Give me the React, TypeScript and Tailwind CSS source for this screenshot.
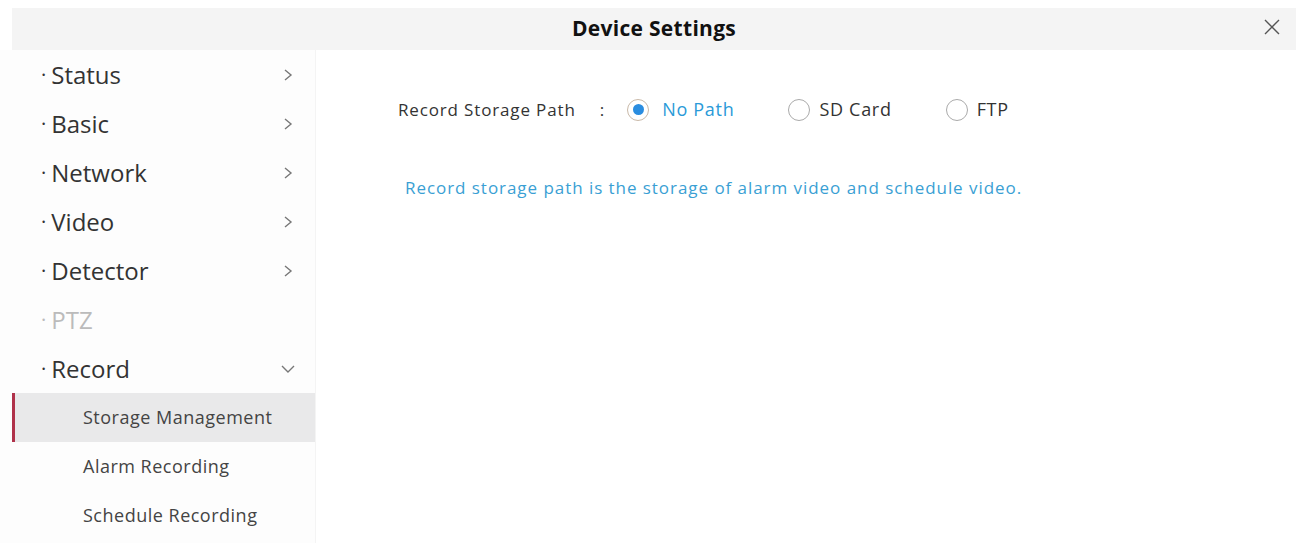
import React from "react";

const font = { fontFamily: '"Open Sans", "Noto Sans", sans-serif' };

const menu = [
  { label: "Status", icon: "right" },
  { label: "Basic", icon: "right" },
  { label: "Network", icon: "right" },
  { label: "Video", icon: "right" },
  { label: "Detector", icon: "right" },
  { label: "PTZ", icon: "none", disabled: true },
  { label: "Record", icon: "down" },
];

const subMenu = [
  { label: "Storage Management", active: true },
  { label: "Alarm Recording" },
  { label: "Schedule Recording" },
];

function Chevron({ dir }: { dir: string }) {
  if (dir === "none") return null;
  return (
    <svg width="14" height="14" viewBox="0 0 14 14" className="text-[#777]">
      {dir === "right" ? (
        <path d="M4 2 L10 7 L4 12" fill="none" stroke="currentColor" strokeWidth="1.4" />
      ) : (
        <path d="M1 4 L7 10 L13 4" fill="none" stroke="currentColor" strokeWidth="1.4" />
      )}
    </svg>
  );
}

function Radio({ label, checked }: { label: string; checked?: boolean }) {
  return (
    <div className={`flex items-center ${checked ? "gap-[13px]" : "gap-[9px]"}`}>
      <span
        className={`w-[22px] h-[22px] rounded-full border flex items-center justify-center ${
          checked ? "border-[#c9b9a8]" : "border-[#aaa]"
        }`}
      >
        {checked && <span className="w-[11px] h-[11px] rounded-full bg-[#2a8de0]" />}
      </span>
      <span className={`text-[18px] tracking-[0.7px] ${checked ? "text-[#2a9ad8]" : "text-[#333]"}`}>
        {label}
      </span>
    </div>
  );
}

export default function App() {
  return (
    <div className="w-[1296px] h-[543px] bg-white overflow-hidden" style={font}>
      {/* Title bar */}
      <div className="mt-[8px] ml-[12px] h-[42px] bg-[#f4f4f4] flex items-center justify-center relative">
        <h1 className="text-[21px] font-bold text-[#111] tracking-[0.3px]">Device Settings</h1>
        <svg
          width="18"
          height="18"
          viewBox="0 0 18 18"
          className="absolute right-[15px] top-[10px] text-[#555]"
        >
          <path d="M2 2 L16 16 M16 2 L2 16" stroke="currentColor" strokeWidth="1.4" />
        </svg>
      </div>

      <div className="flex">
        {/* Sidebar */}
        <nav className="w-[316px] pl-[12px] bg-[#fdfdfd] border-r border-[#f4f4f4] h-[493px]">
          {menu.map((m) => (
            <div key={m.label} className="h-[49px] flex items-center justify-between pl-[29px] pr-[20px]">
              <span className={`text-[24px] ${m.disabled ? "text-[#bbb]" : "text-[#333]"}`}>
                <span className="text-[20px] mr-[5px] relative -top-[2px]">·</span>
                {m.label}
              </span>
              <Chevron dir={m.icon} />
            </div>
          ))}
          {subMenu.map((s) => (
            <div
              key={s.label}
              className={`h-[49px] flex items-center text-[18px] tracking-[0.5px] text-[#444] ${
                s.active ? "bg-[#e9e9ea] border-l-[3px] border-[#b0324a] pl-[68px]" : "pl-[71px]"
              }`}
            >
              {s.label}
            </div>
          ))}
        </nav>

        {/* Content */}
        <main className="flex-1 pl-[82px] pt-[46px]">
          <div className="flex items-center">
            <span className="text-[17px] tracking-[0.85px] text-[#333]">Record Storage Path</span>
            <span className="text-[17px] text-[#333] ml-[24px] mr-[23px]">:</span>
            <div className="flex items-center gap-[54px]">
              <Radio label="No Path" checked />
              <Radio label="SD Card" />
              <Radio label="FTP" />
            </div>
          </div>
          <p className="mt-[52px] ml-[7px] text-[17px] tracking-[0.95px] text-[#3a9fd4]">
            Record storage path is the storage of alarm video and schedule video.
          </p>
        </main>
      </div>
    </div>
  );
}
